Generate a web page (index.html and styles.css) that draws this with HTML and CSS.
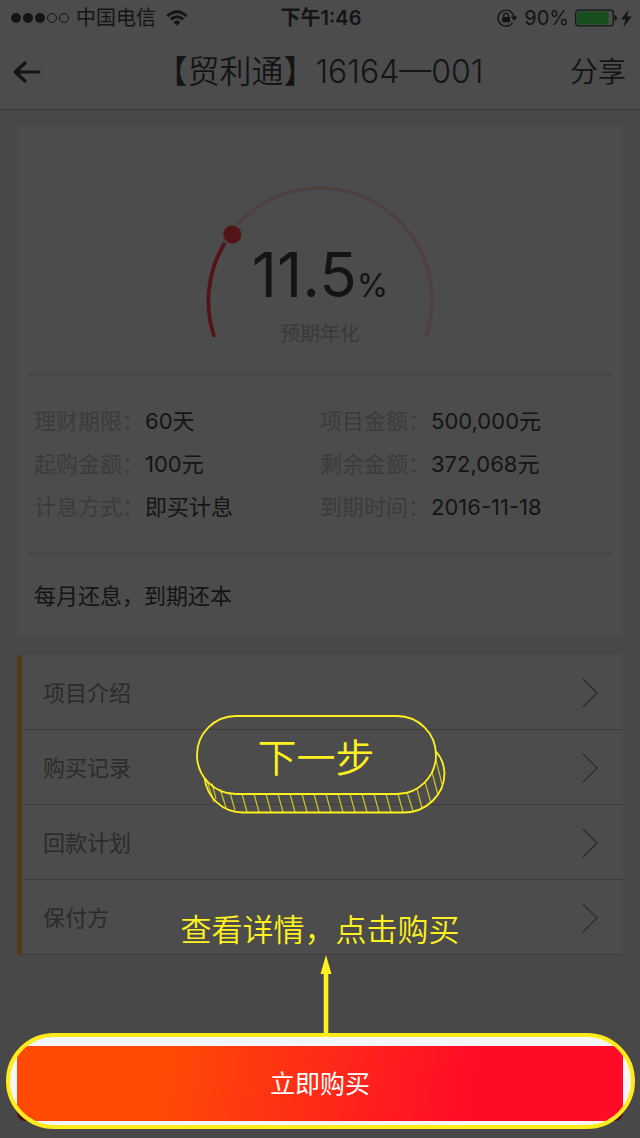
FILE: index.html
```html
<!DOCTYPE html>
<html lang="zh-CN">
<head>
<meta charset="utf-8">
<meta name="viewport" content="width=device-width, initial-scale=1">
<title>【贸利通】16164—001</title>
<link rel="stylesheet" href="styles.css">
</head>
<body>
<div class="status">
  <div class="status-side">
    <svg class="signal" width="60" height="12" viewBox="0 0 60 12" aria-hidden="true">
      <g fill="currentColor"><circle cx="6" cy="6" r="5"/><circle cx="18" cy="6" r="5"/><circle cx="30" cy="6" r="5"/></g>
      <g fill="none" stroke="currentColor"><circle cx="42" cy="6" r="4.5"/><circle cx="54" cy="6" r="4.5"/></g>
    </svg>
    <span>中国电信</span>
    <svg class="wifi" width="22" height="16" viewBox="0 0 22 16" aria-hidden="true">
      <g fill="none" stroke="currentColor" stroke-width="2.8"><path d="M1.4 6.2Q11-2.8 20.6 6.2"/><path d="M4.8 9.6Q11 3.8 17.2 9.6"/></g>
      <path d="M7.4 12Q11 8.8 14.6 12L11 15.8Z" fill="currentColor"/>
    </svg>
  </div>
  <time class="clock">下午1:46</time>
  <div class="status-side status-right">
    <svg class="lock" width="21" height="18" viewBox="0 0 21 18" aria-hidden="true">
      <path d="M15.5 13.8A8 8 0 1 1 17 9" fill="none" stroke="currentColor" stroke-width="1.4"/>
      <path d="M13.8 7.5H20.5L17.2 11.8Z" fill="currentColor"/>
      <path d="M5.2 8H13V13.2H5.2Z" fill="currentColor"/>
      <path d="M6.8 8V6.4a2.3 2.3 0 0 1 4.6 0V8" fill="none" stroke="currentColor" stroke-width="1.3"/>
    </svg>
    <span>90%</span>
    <svg class="battery" width="42" height="18" viewBox="0 0 42 18" aria-hidden="true">
      <rect x=".7" y="1.2" width="37.6" height="15.6" rx="2.5" fill="none" stroke="currentColor" stroke-width="1.3"/>
      <rect x="2" y="2.6" width="31.5" height="12.8" rx="1" fill="#174e1e"/>
      <path d="M39.5 6Q42 6.5 42 9T39.5 12Z" fill="currentColor"/>
    </svg>
    <svg class="bolt" width="11" height="17" viewBox="0 0 11 17" aria-hidden="true"><path d="M7.4 0L0 9.6H4.4L2.6 17L10.8 6.6H6.2Z" fill="currentColor"/></svg>
  </div>
</div>

<header class="nav">
  <button class="back" type="button" aria-label="返回">
    <svg width="28" height="22" viewBox="0 0 28 22" aria-hidden="true"><path d="M26 11H2.5M12 2L2.2 11L12 20" fill="none" stroke="currentColor" stroke-width="3.2" stroke-linecap="round" stroke-linejoin="round"/></svg>
  </button>
  <h1 class="title">【贸利通】16164—001</h1>
  <button class="share" type="button">分享</button>
</header>

<main class="content">
  <section class="card">
    <div class="gauge">
      <svg class="gauge-arc" width="232" height="160" viewBox="0 0 232 160" aria-hidden="true">
        <g fill="none" stroke-width="3.6" stroke-linecap="round">
          <path d="M9.8 149.5A112 112 0 1 1 222.2 149.5" stroke="#4f4142"/>
          <path d="M9.8 149.5A112 112 0 0 1 27 48" stroke="#541317"/>
        </g>
        <circle cx="28.3" cy="48.5" r="11" fill="#4c4848"/>
        <circle cx="28.3" cy="48.5" r="9" fill="#541317"/>
      </svg>
      <div class="gauge-text">
        <strong class="rate">11.5<small>%</small></strong>
        <span class="rate-label">预期年化</span>
      </div>
    </div>
    <dl class="facts">
      <div><dt>理财期限：</dt><dd>60天</dd></div>
      <div><dt>项目金额：</dt><dd>500,000元</dd></div>
      <div><dt>起购金额：</dt><dd>100元</dd></div>
      <div><dt>剩余金额：</dt><dd>372,068元</dd></div>
      <div><dt>计息方式：</dt><dd>即买计息</dd></div>
      <div><dt>到期时间：</dt><dd>2016-11-18</dd></div>
    </dl>
    <p class="repay">每月还息，到期还本</p>
  </section>

  <section class="menu-wrap">
    <nav class="menu">
      <a href="#intro">项目介绍<svg width="16" height="30" viewBox="0 0 16 30" aria-hidden="true"><path d="M1 1L15 15L1 29"/></svg></a>
      <a href="#records">购买记录<svg width="16" height="30" viewBox="0 0 16 30" aria-hidden="true"><path d="M1 1L15 15L1 29"/></svg></a>
      <a href="#plan">回款计划<svg width="16" height="30" viewBox="0 0 16 30" aria-hidden="true"><path d="M1 1L15 15L1 29"/></svg></a>
      <a href="#guarantor">保付方<svg width="16" height="30" viewBox="0 0 16 30" aria-hidden="true"><path d="M1 1L15 15L1 29"/></svg></a>
    </nav>
    <button class="next" type="button">
      <svg width="250" height="100" viewBox="0 0 250 100" aria-hidden="true">
        <g fill="none" stroke="#c9bd27" stroke-width="1.3">
          <path d="M11 66L18 87M16 68.500L20 84M24 74L30 92.500M34 77.500L39 95.500M46 79L51 97M58 79L63 97M70 79L75 97M82 79L87 97M94 79L99 97M106 79L111 97M118 79L123 97M130 79L135 97M142 79L147 97M154 79L159 97M166 79L171 97M178 79L183 97M190 79L195 97M202 79L207 97M211 77L217 96M221 74L226 93M229 67L235 88M236 57L242 80M240 45L246 69"/>
        </g>
        <g fill="none" stroke="#fff01f" stroke-width="1.8">
          <rect x="1" y="1" width="239" height="78" rx="39"/>
          <path d="M8.500 63C11 82 26 97.500 47 97.500H208C230 97.500 248.500 80 248.500 58C248 47 244 41 240 36.500"/>
        </g>
      </svg>
      <span>下一步</span>
    </button>
  </section>
</main>

<footer class="buy-bar">
  <div class="hint">
    <p>查看详情，点击购买</p>
    <svg width="12" height="78" viewBox="0 0 12 78" aria-hidden="true"><path d="M6 0L11.500 19H8.300V78H3.700V19H.5Z" fill="#fff01f"/></svg>
  </div>
  <div class="spotlight"><button class="buy" type="button">立即购买</button></div>
</footer>
</body>
</html>
```

FILE: styles.css
```css
* { box-sizing: border-box; }

body {
  margin: 0;
  background: #484848;
  color: #141414;
  font: 400 22px/32px Inter, "Noto Sans CJK SC", sans-serif;
}

h1, p, dl, dd { margin: 0; font-weight: inherit; }

button {
  margin: 0;
  padding: 0;
  border: 0;
  background: none;
  color: inherit;
  font: inherit;
  cursor: pointer;
}

svg { display: block; flex: none; }

.status {
  display: grid;
  grid-template-columns: 1fr auto 1fr;
  align-items: center;
  height: 36px;
  padding: 0 8px 0 10px;
  background: #4c4c4c;
  font-size: 20px;
}
.status-side { display: flex; align-items: center; gap: 6px; }
.status-right { justify-content: flex-end; }
.wifi { margin-left: 4px; }
.bolt { margin-left: -2px; }
.clock { font-weight: 600; }

.nav {
  display: grid;
  grid-template-columns: 1fr auto 1fr;
  align-items: center;
  height: 74px;
  padding: 0 14px 2px 13px;
  border-bottom: 1px solid #373737;
  background: #4c4c4c;
}
.back { justify-self: start; }
.title { font-size: 32px; font-weight: 350; }
.share { justify-self: end; font-size: 28px; font-weight: 350; }

.content {
  display: grid;
  gap: 17px;
  padding: 16px 17px 0;
}

.card { padding: 0 9px; background: #4c4c4c; }

.gauge {
  display: grid;
  justify-content: center;
  padding: 60px 0 28px;
}
.gauge > * { grid-area: 1 / 1; }
.gauge-text {
  display: flex;
  flex-direction: column;
  align-items: center;
  justify-content: flex-end;
}
.rate { margin-bottom: 6px; font-size: 62px; font-weight: 400; line-height: 60px; }
.rate small { font-size: 32px; }
.rate-label { color: #393939; font-size: 20px; line-height: 24px; }

.facts {
  display: grid;
  grid-template-columns: 1fr 1fr;
  padding: 25px 8px 24px;
  border: solid #434343;
  border-width: 1px 0;
}
.facts > div { display: flex; gap: 1px; line-height: 43px; }
.facts dt { color: #3b3b3b; }

.repay { padding: 26px 8px; }

.menu-wrap { position: relative; }
.menu {
  border-left: 5px solid #513b15;
  background: #4c4c4c;
}
.menu a {
  display: flex;
  align-items: center;
  justify-content: space-between;
  height: 75px;
  padding: 2px 25px 0 21px;
  border-bottom: 1px solid #3c3c3c;
  color: #2b2b2b;
  text-decoration: none;
}
.menu path { fill: none; stroke: #2b2b2b; stroke-width: 1.3; }

.next {
  position: absolute;
  top: 60px;
  left: 50%;
  display: grid;
  margin-left: -124px;
  color: #fff01f;
  font-size: 39px;
  font-weight: 350;
  line-height: 86px;
}
.next > * { grid-area: 1 / 1; }
.next span { padding-right: 10px; }

.buy-bar {
  position: relative;
  margin-top: 78px;
  padding: 0 5px 9px 6px;
}
/* Dimmed part of the button that stays outside the highlighted area. */
.buy-bar::before {
  content: "";
  position: absolute;
  inset: 13px 17px 17px;
  border-radius: 8px;
  background: #4a1214;
}
.spotlight {
  position: relative;
  overflow: hidden;
  padding: 9px 8px 4px 7px;
  border: 4px solid #ffea1a;
  border-radius: 48px;
  background: #f5f6fa;
}
.buy {
  display: block;
  width: 100%;
  height: 75px;
  background: linear-gradient(100deg, #ff4a06 25%, #ff0b28 75%);
  color: #fff;
  font-size: 25px;
}

.hint {
  position: absolute;
  bottom: 100%;
  left: 0;
  right: 0;
  display: flex;
  flex-direction: column;
  align-items: center;
  color: #fff01f;
  font-size: 31px;
  font-weight: 350;
}
.hint p { line-height: 50px; }
.hint svg { margin-left: 12px; }
```
